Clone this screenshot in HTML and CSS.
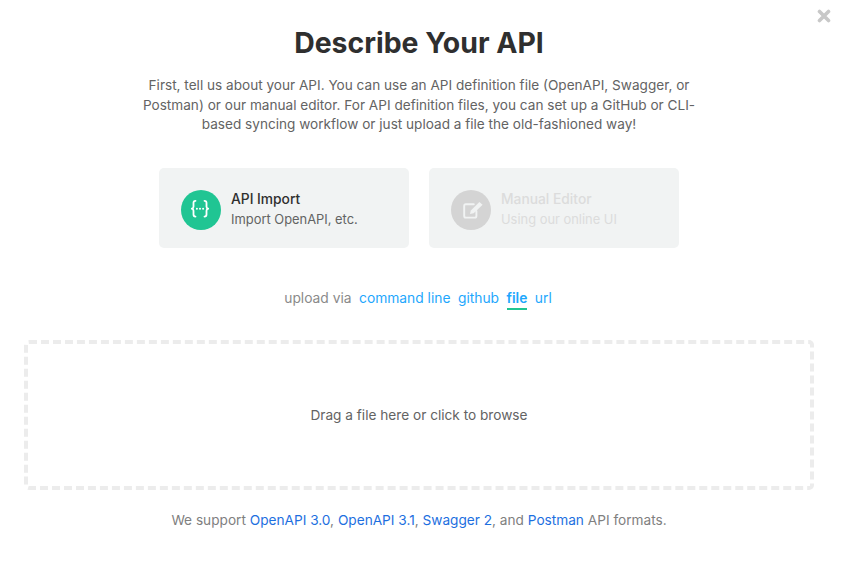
FILE: index.html
```html
<!DOCTYPE html>
<html lang="en">
<head>
<meta charset="utf-8">
<title>Describe Your API</title>
<link rel="stylesheet" href="styles.css">
</head>
<body>
<main class="page">
  <button class="close" aria-label="Close">
    <svg viewBox="0 0 14 14" width="14" height="14"><path d="M2.500 2.500l9 9M11.500 2.500l-9 9" stroke="#c8c8c8" stroke-width="3.600" stroke-linecap="round" fill="none"/></svg>
  </button>
  <h1 class="title">Describe Your API</h1>
  <p class="intro">First, tell us about your API. You can use an API definition file (OpenAPI, Swagger, or Postman) or our manual editor. For API definition files, you can set up a GitHub or CLI-based syncing workflow or just upload a file the old-fashioned way!</p>
  <div class="cards">
    <div class="card">
      <span class="badge badge-green">
        <svg viewBox="0 0 24 24" width="24" height="24" fill="none" stroke="#fff" stroke-width="1.800" stroke-linecap="round" stroke-linejoin="round"><path d="M6.500 2.800C5 2.800 4.500 3.600 4.500 4.800V8.700c0 1.200-.6 1.700-1.700 2 1.100.3 1.700.8 1.700 2v3.900c0 1.200.5 2 2 2"/><path d="M15.500 2.800c1.500 0 2 .8 2 2V8.700c0 1.200.6 1.700 1.700 2-1.100.3-1.700.8-1.700 2v3.900c0 1.200-.5 2-2 2"/><path d="M7.900 10.700h.01M11 10.700h.01M14.100 10.700h.01" stroke-width="2"/></svg>
      </span>
      <div class="card-text">
        <div class="card-title">API Import</div>
        <div class="card-sub">Import OpenAPI, etc.</div>
      </div>
    </div>
    <div class="card card-disabled">
      <span class="badge badge-grey">
        <svg viewBox="0 0 24 24" width="24" height="24" fill="none"><path d="M17.400 13v5a1.600 1.600 0 0 1-1.600 1.600H6.800a1.600 1.600 0 0 1-1.600-1.600V7.800a1.600 1.600 0 0 1 1.600-1.600h8" stroke="#f1f3f3" stroke-width="1.900" stroke-linecap="round"/><path d="M11 16l.8-3.500 8.600-8.500 3.200 2.800-8.900 8.500z" fill="#f1f3f3"/></svg>
      </span>
      <div class="card-text">
        <div class="card-title">Manual Editor</div>
        <div class="card-sub">Using our online UI</div>
      </div>
    </div>
  </div>
  <nav class="tabs">
    <span class="tabs-label">upload via</span>
    <a class="tab">command line</a>
    <a class="tab">github</a>
    <a class="tab tab-active">file</a>
    <a class="tab">url</a>
  </nav>
  <div class="drop">Drag a file here or click to browse</div>
  <p class="formats">We support <a>OpenAPI 3.0</a>, <a>OpenAPI 3.1</a>, <a>Swagger 2</a>, and <a>Postman</a> API formats.</p>
</main>
</body>
</html>
```
FILE: styles.css
```css
* { box-sizing: border-box; }
html, body { margin: 0; background: #fff; }
body {
  font-family: Inter, "Liberation Sans", sans-serif;
  color: #637288;
  height: 567px;
  overflow: hidden;
}
.page {
  position: relative;
  width: 841px;
  padding: 25px 27px 0 24px;
  display: flex;
  flex-direction: column;
  align-items: center;
}
.close {
  position: absolute;
  top: 9px;
  right: 10px;
  padding: 0;
  border: 0;
  background: none;
  line-height: 0;
}
.title {
  margin: 0;
  font-size: 28.400px;
  line-height: 36px;
  font-weight: 700;
  color: #2f2f2f;
}
.intro {
  margin: 15px 0 0;
  width: 560px;
  font-size: 13.600px;
  line-height: 19.600px;
  text-align: center;
  color: #636363;
}
.cards {
  display: flex;
  gap: 20px;
  margin-top: 33px;
}
.card {
  width: 250px;
  height: 80px;
  padding: 4px 22px 0;
  display: flex;
  align-items: center;
  gap: 10px;
  background: #f1f3f3;
  border-radius: 5px;
}
.badge {
  width: 40px;
  height: 40px;
  border-radius: 50%;
  display: flex;
  align-items: center;
  justify-content: center;
  flex: none;
}
.badge-green { background: #20c593; }
.badge-grey { background: #d4d4d4; }
.card-title {
  font-size: 13.800px;
  line-height: 20px;
  font-weight: 500;
  color: #2f2f2f;
}
.card-sub {
  margin-top: 1px;
  font-size: 12.900px;
  line-height: 20px;
  color: #636363;
}
.card-disabled .card-title,
.card-disabled .card-sub { color: #dcdcdc; }
.tabs {
  margin-top: 40px;
  padding-right: 2px;
  height: 22px;
  display: flex;
  align-items: flex-start;
  gap: 7.500px;
  font-size: 13.800px;
  line-height: 20px;
}
.tabs-label { color: #8a8a8a; }
.tab { color: #1ea7fd; height: 22px; }
.tab-active {
  font-weight: 600;
  border-bottom: 2px solid #20c593;
}
.drop {
  margin-top: 30px;
  width: 790px;
  height: 150px;
  border: 4px dashed #ececec;
  border-radius: 5px;
  display: flex;
  align-items: center;
  justify-content: center;
  font-size: 13.650px;
  color: #636363;
}
.formats {
  margin: 20px 0 0;
  font-size: 13.650px;
  line-height: 20px;
  color: #808080;
}
.formats a { color: #1d6fe0; }
```
